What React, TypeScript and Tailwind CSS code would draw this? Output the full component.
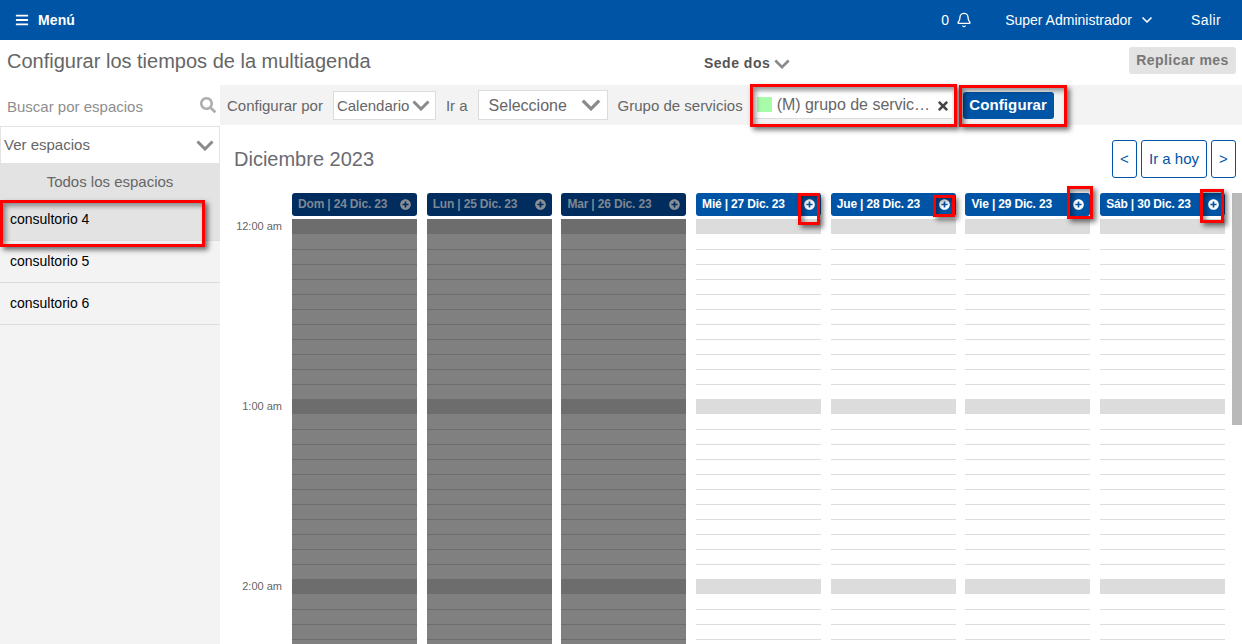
import React from "react";
import { FaBars, FaPlusCircle, FaSearch, FaTimes } from "react-icons/fa";
import { Bell, ChevronDown } from "lucide-react";

const Chevron = ({ w = 18, h = 11 }: { w?: number; h?: number }) => (
  <svg width={w} height={h} viewBox="0 0 18 11" fill="none" className="shrink-0">
    <path d="M1.5 1.5 L9 9 L16.5 1.5" stroke="#8a8a8a" strokeWidth="3" />
  </svg>
);

const RedBox = ({ className }: { className: string }) => (
  <div
    className={`absolute border-[3px] border-[#ff0000] shadow-[3px_3px_5px_rgba(0,0,0,0.55),inset_3px_3px_5px_rgba(0,0,0,0.4)] pointer-events-none ${className}`}
  />
);

const days = [
  { t: "Dom | 24 Dic. 23", off: true },
  { t: "Lun | 25 Dic. 23", off: true },
  { t: "Mar | 26 Dic. 23", off: true },
  { t: "Mié | 27 Dic. 23", off: false },
  { t: "Jue | 28 Dic. 23", off: false },
  { t: "Vie | 29 Dic. 23", off: false },
  { t: "Sáb | 30 Dic. 23", off: false },
];

const slots = Array.from({ length: 29 }, (_, i) => i);

const DayColumn = ({ t, off }: { t: string; off: boolean }) => (
  <div className="flex flex-col">
    <div
      className={`h-[23px] rounded-[3px] flex items-center justify-between pl-[6px] pr-[6px] text-[12px] font-bold tracking-[-0.17px] ${
        off ? "bg-[#012c5e] text-[#7d8894]" : "bg-[#0054a6] text-white"
      }`}
    >
      <span className="pb-[2px]">{t}</span>
      <FaPlusCircle className={`text-[11px] mb-[1px] ${off ? "text-[#8a8f96]" : "text-white"}`} />
    </div>
    <div className="mt-[3px] flex flex-col">
      {slots.map((i) =>
        i % 12 === 0 ? (
          <div key={i} className={`h-[15px] ${off ? "bg-[#6d6d6d]" : "bg-[#dcdcdc]"}`} />
        ) : i % 12 === 1 ? (
          <div key={i} className={`h-[15px] ${off ? "bg-[#808080]" : "bg-white"}`} />
        ) : (
          <div
            key={i}
            className={`h-[15px] border-t ${off ? "bg-[#808080] border-[#6d6d6d]" : "bg-white border-[#dcdcdc]"}`}
          />
        )
      )}
    </div>
  </div>
);

export default function App() {
  return (
    <div className="relative h-[644px] w-[1242px] overflow-hidden bg-white font-['Liberation_Sans',Arial,sans-serif] text-[#666]">
      <header className="h-10 bg-[#0054a6] text-white flex items-center text-[14px] pl-[15px]">
        <FaBars className="text-[14px]" />
        <span className="ml-[9px] font-bold text-[14px] tracking-[0.1px]">Menú</span>
        <span className="ml-auto">0</span>
        <Bell size={16} className="ml-[7px]" />
        <span className="ml-[33px]">Super Administrador</span>
        <ChevronDown size={16} strokeWidth={2.5} className="ml-[7px]" />
        <span className="ml-[36px] mr-[21px] tracking-[0.4px]">Salir</span>
      </header>

      <div className="h-[45px] flex items-center pl-[7px] pr-[6px]">
        <h1 className="text-[20px] text-[#666] w-[697px] pb-[4px]">Configurar los tiempos de la multiagenda</h1>
        <div className="flex items-center font-bold text-[14px] text-[#555] tracking-[0.5px] pt-[1px]">
          Sede dos
          <span className="ml-[4px] mt-[2px]">
            <Chevron w={16} h={10} />
          </span>
        </div>
        <button className="ml-auto mb-[4px] h-[27px] w-[107px] rounded-[3px] bg-[#e3e3e3] text-[#777] font-bold text-[14px] tracking-[0.45px]">
          Replicar mes
        </button>
      </div>

      <div className="flex h-[559px]">
        <aside className="w-[220px] shrink-0 bg-[#f3f3f3] flex flex-col">
          <div className="h-[41px] bg-white flex items-center pl-[7px] pr-[4px] justify-between text-[15px] text-[#8e8e8e]">
            <span className="pt-[3px]">Buscar por espacios</span>
            <FaSearch className="text-[#aeaeae] text-[16px] mb-[1px]" />
          </div>
          <div className="h-[38px] bg-white border border-[#e3e3e3] flex items-center justify-between pl-[3px] pr-[5px] text-[15px] text-[#666]">
            <span>Ver espacios</span>
            <Chevron />
          </div>
          <div className="h-[35px] bg-[#e3e3e3] flex items-center justify-center text-[15px] text-[#666] pt-[2px]">
            Todos los espacios
          </div>
          {["consultorio 4", "consultorio 5", "consultorio 6"].map((c, i) => (
            <div
              key={c}
              className={`h-[42px] border-b border-[#dcdcdc] pl-[10px] flex items-center text-[14px] text-black ${
                i === 0 ? "bg-[#e3e3e3] pb-[1px]" : ""
              }`}
            >
              {c}
            </div>
          ))}
        </aside>

        <main className="flex-1 min-w-0 flex flex-col">
          <div className="h-[40px] bg-[#f3f3f3] flex items-center pl-[7px] text-[15px] text-[#666]">
            <span className="pt-[2px]">Configurar por</span>
            <div className="ml-[10px] h-[29px] w-[103px] bg-white border border-[#dcdcdc] flex items-center justify-between pl-[3px] pr-[5px]">
              <span className="pt-[2px]">Calendario</span>
              <Chevron />
            </div>
            <span className="ml-[10px] pt-[2px]">Ir a</span>
            <div className="ml-[10px] h-[30px] w-[130px] bg-white border border-[#dcdcdc] flex items-center justify-between pl-[10px] pr-[6px] text-[16px]">
              <span className="pt-[2px]">Seleccione</span>
              <Chevron w={20} h={12} />
            </div>
            <span className="ml-[10px] pt-[2px]">Grupo de servicios</span>
            <div className="ml-[11px] h-[27px] w-[198px] bg-white border-b border-[#dcdcdc] flex items-center pl-[3px] pr-[2px]">
              <span className="w-[15px] h-[15px] bg-[#a8fba8] shrink-0" />
              <span className="ml-[5px] text-[16px] tracking-[-0.02px] text-[#666] whitespace-nowrap">(M) grupo de servic…</span>
              <FaTimes className="ml-auto text-[#444] text-[14px] mt-[2px]" />
            </div>
            <button className="ml-[11px] h-[27px] w-[91px] rounded-[3px] bg-[#0054a6] text-white font-bold text-[15px] tracking-[0.1px] pt-[1px]">
              Configurar
            </button>
          </div>

          <div className="h-[68px] flex items-start justify-between pl-[14px] pr-[6px] pt-[15px]">
            <h2 className="text-[20px] text-[#6b6b73] pt-[4px]">Diciembre 2023</h2>
            <div className="flex gap-[4px] text-[15px] text-[#0054a6]">
              <button className="h-[38px] w-[25px] border border-[#0054a6] rounded-[3px]">&lt;</button>
              <button className="h-[38px] w-[66px] border border-[#0054a6] rounded-[3px]">Ir a hoy</button>
              <button className="h-[38px] w-[25px] border border-[#0054a6] rounded-[3px]">&gt;</button>
            </div>
          </div>

          <div className="flex min-h-0 flex-1">
            <div className="w-[62px] shrink-0 pt-[25px] text-right text-[11px] text-[#666]">
              <div className="h-[180px]">12:00 am</div>
              <div className="h-[180px]">1:00 am</div>
              <div className="h-[180px]">2:00 am</div>
            </div>
            <div className="ml-[10px] w-[933px] shrink-0 grid grid-cols-[repeat(7,125px)] gap-x-[9.7px] items-start">
              {days.map((d) => (
                <DayColumn key={d.t} t={d.t} off={d.off} />
              ))}
            </div>
            <div className="ml-[7px] w-[10px] h-[232px] bg-[#b9b9b9]" />
          </div>
        </main>
      </div>

      <RedBox className="left-0 top-[200px] w-[205px] h-[47px]" />
      <RedBox className="left-[750px] top-[84px] w-[207px] h-[43px]" />
      <RedBox className="left-[959px] top-[85px] w-[108px] h-[42px]" />
      <RedBox className="left-[798px] top-[193px] w-[22px] h-[32px]" />
      <RedBox className="left-[933px] top-[195px] w-[22px] h-[22px]" />
      <RedBox className="left-[1067px] top-[186px] w-[26px] h-[33px]" />
      <RedBox className="left-[1200px] top-[189px] w-[24px] h-[34px]" />
    </div>
  );
}
